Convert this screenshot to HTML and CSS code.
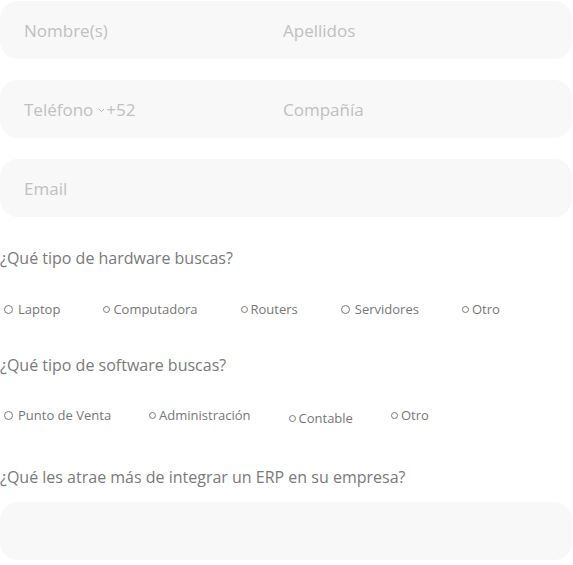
FILE: index.html
```html
<!DOCTYPE html>
<html>
<head>
    <title>Formulario de contacto</title>
    <link rel="stylesheet" href="styles.css">
</head>
<body>
    <form class="contact-form">
        <!-- Datos personales -->
        <div class="field field-split">
            <span class="placeholder">Nombre(s)</span>
            <span class="placeholder">Apellidos</span>
        </div>
        <div class="field field-split">
            <span class="placeholder phone">
                Teléfono
                <svg class="chevron" width="7" height="5" viewBox="0 0 7 5"><path d="M1 1 L3.5 3.6 L6 1" fill="none" stroke="#b5b5b5" stroke-width="1"/></svg>
                +52
            </span>
            <span class="placeholder">Compañía</span>
        </div>
        <div class="field">
            <span class="placeholder">Email</span>
        </div>

        <!-- Hardware -->
        <p class="question q-hardware">¿Qué tipo de hardware buscas?</p>
        <div class="options options-hw">
            <label class="option"><span class="radio radio-lg"></span>Laptop</label>
            <label class="option"><span class="radio"></span>Computadora</label>
            <label class="option"><span class="radio"></span>Routers</label>
            <label class="option"><span class="radio radio-lg"></span>Servidores</label>
            <label class="option"><span class="radio"></span>Otro</label>
        </div>

        <!-- Software -->
        <p class="question q-software">¿Qué tipo de software buscas?</p>
        <div class="options options-sw">
            <label class="option"><span class="radio radio-lg"></span>Punto de Venta</label>
            <label class="option"><span class="radio"></span>Administración</label>
            <label class="option option-low"><span class="radio"></span>Contable</label>
            <label class="option"><span class="radio"></span>Otro</label>
        </div>

        <!-- ERP -->
        <p class="question q-erp">¿Qué les atrae más de integrar un ERP en su empresa?</p>
        <div class="field"></div>
    </form>
</body>
</html>
```

FILE: styles.css
```css
* {
    margin: 0;
    padding: 0;
    box-sizing: border-box;
}
body {
    font-family: 'Open Sans', 'Noto Sans', sans-serif;
    background: #ffffff;
    color: #7a7a7a;
}
.contact-form {
    width: 572px;
    padding-top: 1px;
}
.field {
    height: 58px;
    background: #f8f8f8;
    border-radius: 18px;
    margin-bottom: 21px;
    padding-left: 24px;
    display: flex;
    align-items: center;
}
.field-split {
    display: grid;
    grid-template-columns: 259px 1fr;
    align-items: center;
}
.placeholder {
    font-size: 17px;
    color: #c0c0c0;
}
.phone {
    display: flex;
    align-items: center;
}
.chevron {
    margin: 3px 1px 0 5px;
}
.question {
    font-size: 16px;
    line-height: 20px;
    color: #7a7a7a;
}
.q-hardware {
    margin-top: 31px;
}
.q-software {
    margin-top: 37px;
}
.q-erp {
    margin-top: 40px;
    margin-bottom: 15px;
}
.options {
    display: flex;
    align-items: flex-start;
    padding-left: 4px;
    font-size: 13px;
    line-height: 18px;
    color: #777777;
}
.options-hw {
    gap: 43px;
    margin-top: 32px;
}
.options-sw {
    gap: 38px;
    margin-top: 31px;
}
.option {
    display: flex;
    align-items: center;
}
.option-low {
    margin-top: 3px;
}
.radio {
    display: inline-block;
    width: 7px;
    height: 7px;
    border: 1px solid #7a7a7a;
    border-radius: 50%;
    margin-right: 3px;
}
.radio-lg {
    width: 9px;
    height: 9px;
    margin-right: 5px;
}
```
